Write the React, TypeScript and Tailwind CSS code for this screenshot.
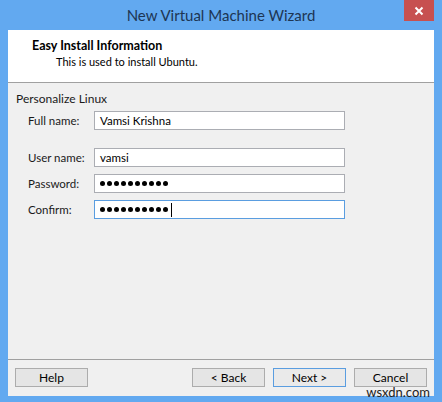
import React from "react";

const Field = ({ label, value, focused, password }: { label: string; value: string; focused?: boolean; password?: boolean }) => (
  <div className="flex items-center h-[19px]">
    <div className="w-[78px] pl-[12px] text-[11.5px] text-[#1a1a1a]">{label}</div>
    <div
      className={`flex items-center w-[251px] h-[19px] bg-white border pl-[5px] ${focused ? "border-[#5a9de0]" : "border-[#abadb3]"}`}
    >
      {password ? (
        <span className="flex items-center gap-[2px]">
          {Array.from({ length: 10 }).map((_, i) => (
            <span key={i} className="w-[5px] h-[5px] rounded-full bg-black" />
          ))}
          {focused && <span className="ml-[1px] w-px h-[14px] bg-black" />}
        </span>
      ) : (
        <span className="text-[11.5px] text-black">{value}</span>
      )}
    </div>
  </div>
);

const Btn = ({ children, primary }: { children: React.ReactNode; primary?: boolean }) => (
  <button
    className={`w-[73px] h-[19px] flex items-center justify-center text-[12px] text-black border ${primary ? "border-[#5a9de0] bg-[#eaeaea]" : "border-[#acacac] bg-[#e5e5e5]"}`}
  >
    {children}
  </button>
);

export default function App() {
  return (
    <div
      className="relative w-[442px] h-[402px] bg-[#62a9f0] flex flex-col"
      style={{ fontFamily: 'Lato, "Noto Sans", sans-serif' }}
    >
      <div className="h-[30px] flex items-center justify-center text-[15px] text-[#1d3553]">
        New Virtual Machine Wizard
      </div>
      <div className="absolute top-0 right-[8px] w-[30px] h-[21px] bg-[#c75050] flex items-center justify-center">
        <svg width="10" height="10" viewBox="0 0 10 10">
          <path d="M1.5 1.5 L8.5 8.5 M8.5 1.5 L1.5 8.5" stroke="white" strokeWidth="2" />
        </svg>
      </div>
      <div className="mx-[8px] h-[366px] bg-[#f0f0f0] flex flex-col">
        <div className="h-[53px] bg-white border-b border-[#a0a0a0] pt-[8px] pl-[24px]">
          <div className="text-[12.5px] font-bold text-black leading-[16px]">Easy Install Information</div>
          <div className="text-[11px] text-black leading-[16px] pl-[24px]">This is used to install Ubuntu.</div>
        </div>
        <div className="flex-1 pt-[8px] pl-[8px]">
          <div className="text-[12px] text-[#1a1a1a] leading-[16px]">Personalize Linux</div>
          <div className="mt-[4px] flex flex-col">
            <Field label="Full name:" value="Vamsi Krishna" />
            <div className="h-[18px]" />
            <Field label="User name:" value="vamsi" />
            <div className="h-[7px]" />
            <Field label="Password:" value="" password />
            <div className="h-[7px]" />
            <Field label="Confirm:" value="" password focused />
          </div>
        </div>
        <div className="h-[37px] border-t border-[#a0a0a0] flex items-start pt-[8px] pl-[7px] pr-[7px]">
          <Btn>Help</Btn>
          <div className="flex-1" />
          <div className="flex gap-[8px]">
            <Btn>&lt; Back</Btn>
            <Btn primary>Next &gt;</Btn>
            <Btn>Cancel</Btn>
          </div>
        </div>
      </div>
      <div className="absolute right-[12px] bottom-[3px] text-[13px] text-[#222] leading-none">wsxdn.com</div>
    </div>
  );
}
